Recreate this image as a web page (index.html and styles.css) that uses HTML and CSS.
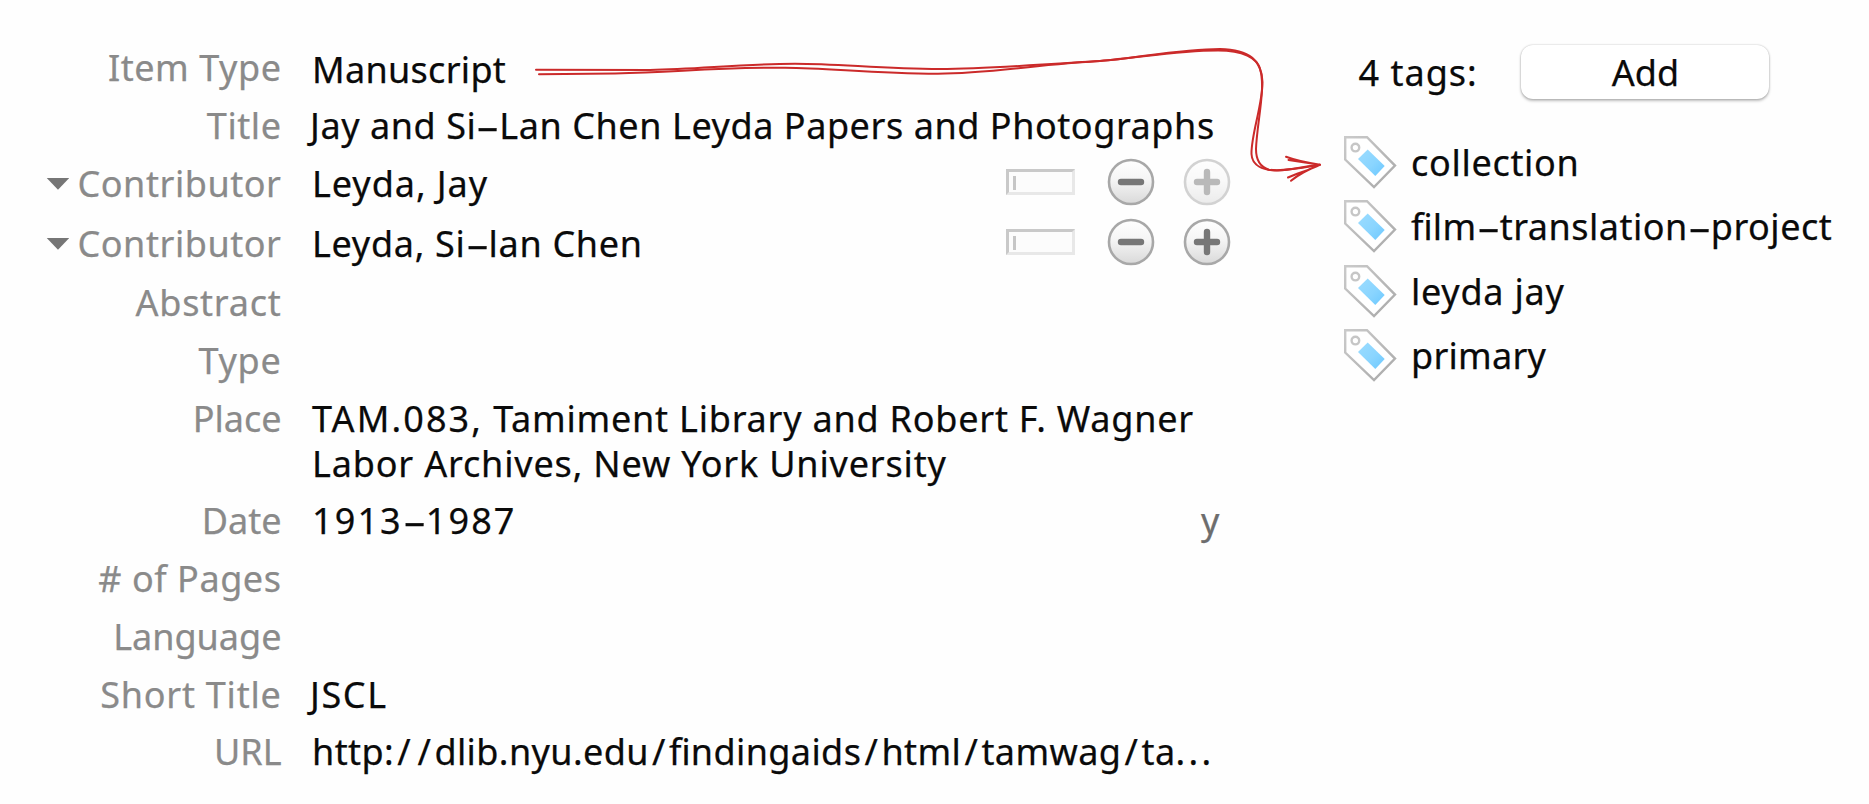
FILE: index.html
```html
<!DOCTYPE html>
<html lang="en">
<head>
<meta charset="utf-8">
<title>Item details</title>
<link rel="stylesheet" href="styles.css">
</head>
<body>
<svg class="symbols" width="0" height="0" aria-hidden="true">
  <defs>
    <linearGradient id="knob" x1="0" y1="0" x2="0" y2="1"><stop offset="0" stop-color="#fff"/><stop offset=".45" stop-color="#f5f5f5"/><stop offset="1" stop-color="#d9d9d9"/></linearGradient>
    <linearGradient id="rim" x1="0" y1="0" x2="1" y2="1"><stop offset="0" stop-color="#cacaca"/><stop offset="1" stop-color="#a9a9a9"/></linearGradient>
    <linearGradient id="blue" x1="0" y1="0" x2="1" y2="1"><stop offset="0" stop-color="#9bdcff"/><stop offset=".55" stop-color="#8ad5ff"/><stop offset="1" stop-color="#6cc8ff"/></linearGradient>
    <symbol id="minus" viewBox="0 0 48 48"><circle cx="24" cy="24" r="22" fill="url(#knob)" stroke="#a8a8a8" stroke-width="2.6"/><path d="M14 24H34" stroke="#777" stroke-width="6.4" stroke-linecap="round"/></symbol>
    <symbol id="plus" viewBox="0 0 48 48"><circle cx="24" cy="24" r="22" fill="url(#knob)" stroke="#a8a8a8" stroke-width="2.6"/><path d="M14 24H34M24 14V34" stroke="#777" stroke-width="6.4" stroke-linecap="round"/></symbol>
    <symbol id="tag" viewBox="0 0 53 53"><path d="M1.2 1.2H23L51 29.6L30 51L1.2 23.6Z" fill="#fff" stroke="url(#rim)" stroke-width="2.4"/><circle cx="11.4" cy="11.6" r="3.8" fill="#fff" stroke="#c6c6c6" stroke-width="2.4"/><path d="M23.7 13.6L40.7 30L31.3 40L14 23Z" fill="url(#blue)"/></symbol>
  </defs>
</svg>
<div class="panel">
  <main class="fields">
    <div class="row"><div class="label">Item Type</div><div class="value manuscript">Manuscript</div></div>
    <div class="row"><div class="label">Title</div><div class="value title">Jay and Si<span class="dash">-</span>Lan Chen Leyda Papers and Photographs</div></div>
    <div class="row creator"><div class="label"><i class="caret"></i>Contributor</div><div class="value jay">Leyda, Jay</div>
      <div class="tools"><span class="mode"></span><svg class="knob"><use href="#minus"/></svg><svg class="knob off"><use href="#plus"/></svg></div></div>
    <div class="row creator second"><div class="label"><i class="caret"></i>Contributor</div><div class="value chen">Leyda, Si<span class="dash">-</span>lan Chen</div>
      <div class="tools"><span class="mode"></span><svg class="knob"><use href="#minus"/></svg><svg class="knob"><use href="#plus"/></svg></div></div>
    <div class="row"><div class="label wide">Abstract</div></div>
    <div class="row"><div class="label wide">Type</div></div>
    <div class="row place"><div class="label tight">Place</div><div class="value"><span class="line1"><span class="code">TAM.083,</span> Tamiment Library and Robert F. Wagner</span><br><span class="line2">Labor Archives, New York University</span></div></div>
    <div class="row"><div class="label tight">Date</div><div class="value date">1913<span class="dash">-</span>1987</div><div class="hint">y</div></div>
    <div class="row"><div class="label"># of Pages</div></div>
    <div class="row"><div class="label tight">Language</div></div>
    <div class="row"><div class="label wide">Short Title</div><div class="value short">JSCL</div></div>
    <div class="row"><div class="label tight">URL</div><div class="value url">http:<span class="slash">/</span><span class="slash">/</span>dlib.nyu.edu<span class="slash">/</span><span class="lig">fi</span>ndingaids<span class="slash">/</span>html<span class="slash">/</span>tamwag<span class="slash">/</span>ta<span class="dots">...</span></div></div>
  </main>
  <aside class="tags">
    <div class="head"><span class="count">4 tags:</span><button class="add">Add</button></div>
    <div class="tag"><svg class="icon"><use href="#tag"/></svg><div class="name collection">collection</div></div>
    <div class="tag"><svg class="icon"><use href="#tag"/></svg><div class="name film"><span class="lig">fi</span>lm<span class="dash">-</span>translation<span class="dash">-</span>project</div></div>
    <div class="tag"><svg class="icon"><use href="#tag"/></svg><div class="name leyda">leyda jay</div></div>
    <div class="tag"><svg class="icon"><use href="#tag"/></svg><div class="name primary">primary</div></div>
  </aside>
  <svg class="arrow" viewBox="0 0 1869 804" aria-hidden="true">
    <path d="M536 69.7L650 69.9C700 69 740 63.9 795 63.7C840 63.7 880 68.8 940 69C990 69 1035 64.5 1100 61C1135 58.5 1180 49 1220 49C1250 49.5 1262 61 1262.5 82C1262.5 105 1251 135 1251.5 154C1252 165 1262 170.5 1278 170.5C1291 170 1306 166 1320 164.7"/>
    <path d="M539 74.2L615 73.4C680 72 710 67.5 785 67.7C830 67.7 870 73.7 938 73.7C990 73.7 1040 64 1100 61C1140 58 1175 50.5 1218 50.5C1243 50.5 1257 58 1260 69C1266 88 1257 122 1256 149C1256 160 1260 167 1269 169.7C1283 172 1304 167.5 1320 164.7"/>
    <path d="M1286 156.8C1296 160.5 1308 163 1320 164.7L1288.5 160M1288 177.5C1298 173 1310 170 1320 164.7C1309 169 1299 174 1291 180.8"/>
  </svg>
</div>
</body>
</html>
```
FILE: styles.css
```css
body { margin: 0; background: #fefefe; }
.symbols { position: absolute; }
.panel {
  position: relative;
  display: grid;
  grid-template-columns: 1344px 1fr;
  width: 1869px;
  height: 804px;
  overflow: hidden;
  font: 36px/45px "Noto Sans", "Open Sans", sans-serif;
  -webkit-text-stroke: .25px;
  color: #0a0a0a;
  white-space: nowrap;
}
.fields { padding-top: 45px; }
.row {
  display: grid;
  grid-template-columns: 281.5px 700px 1fr;
  column-gap: 30.5px;
  height: 57.9px;
}
.label { display: flex; justify-content: flex-end; align-items: flex-start; color: #8a8a8a; letter-spacing: .55px; }
.label.tight { letter-spacing: 0; }
.label.wide { letter-spacing: .75px; }
.manuscript { padding-top: 1.5px; letter-spacing: .3px; }
.title { margin-left: -2px; letter-spacing: .56px; }
.jay { letter-spacing: .95px; }
.chen { letter-spacing: .7px; }
.line1 { letter-spacing: .78px; }
.code { letter-spacing: 2.1px; }
.line2 { letter-spacing: .83px; }
.date { letter-spacing: 2.1px; }
.short { margin-left: -2px; letter-spacing: 1.6px; }
.url { letter-spacing: .4px; }
.slash { margin: 0 3.2px; }
.dots { letter-spacing: 3.4px; }
.lig { letter-spacing: 0; }
.creator { grid-template-columns: 281.5px 663.5px auto; height: 60px; }
.creator.second { height: 59px; }
.place { height: 102.3px; }
.caret {
  width: 23px;
  height: 12px;
  margin: 17px 8px 0 0;
  background: #767676;
  clip-path: polygon(0 0, 100% 0, 50% 100%);
}
.tools { display: flex; align-items: flex-start; gap: 28px; padding-top: 8px; }
.mode {
  box-sizing: border-box;
  width: 69px;
  height: 26px;
  margin-right: 4px;
  border: 3px solid;
  border-color: #c9c9c9 #e8e8e8 #e8e8e8 #c9c9c9;
  background: linear-gradient(#c6c6c6, #c6c6c6) 4px 4px / 3px 14px no-repeat #fcfcfc;
}
.knob { width: 48px; height: 48px; margin-top: -11px; }
.off { opacity: .5; }
.hint { color: #6d6d6d; margin-left: 158.5px; }
.dash { display: inline-block; width: 23px; text-align: center; transform: scaleX(2); letter-spacing: 0; }
.tags { padding-top: 45px; }
.head { display: flex; align-items: flex-start; height: 90.5px; }
.count { box-sizing: border-box; width: 177px; padding: 5px 0 0 14.5px; letter-spacing: 1px; }
.add {
  width: 248px;
  height: 54px;
  padding: 1px 0 0 1px;
  border: 0;
  border-radius: 12px;
  background: #fff;
  box-shadow: 0 0 2px rgba(0,0,0,.25), 0 2px 3px rgba(0,0,0,.25);
  font: inherit;
  color: inherit;
}
.tag { display: flex; align-items: flex-start; gap: 14px; height: 64.6px; }
.name { padding-top: 4px; }
.collection { letter-spacing: .7px; }
.film { letter-spacing: .5px; }
.leyda { letter-spacing: .75px; }
.primary { letter-spacing: .25px; }
.icon { width: 53px; height: 53px; }
.arrow {
  position: absolute;
  inset: 0;
  width: 1869px;
  height: 804px;
  fill: none;
  stroke: #cb2a2a;
  stroke-width: 2;
  stroke-linecap: round;
}
```
